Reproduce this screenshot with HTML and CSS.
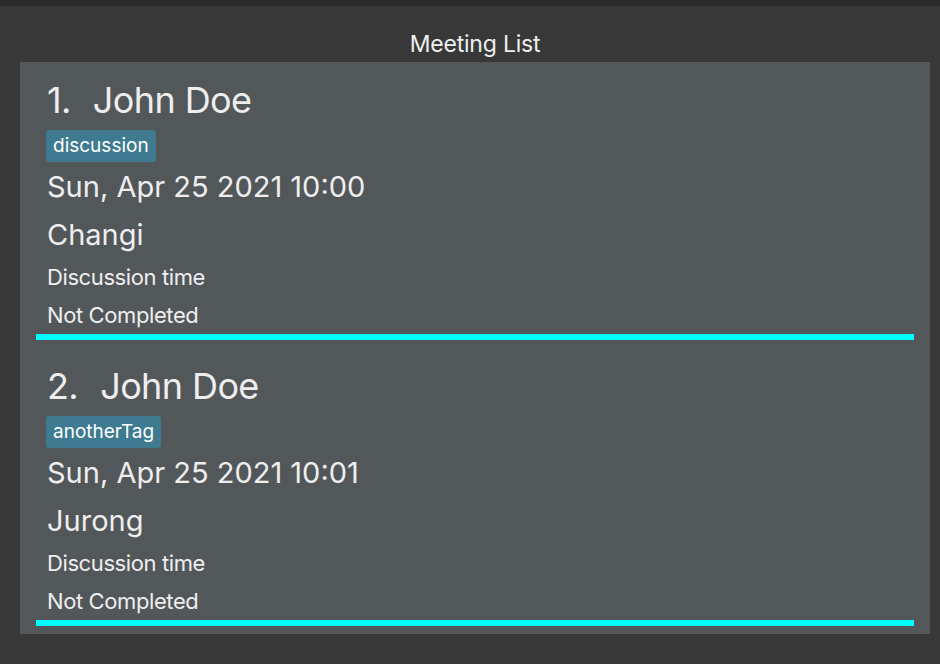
FILE: index.html
```html
<!DOCTYPE html>
<html>
<head>
<meta charset="utf-8">
<link rel="stylesheet" href="styles.css">
</head>
<body>
<div class="topbar"></div>
<div class="title">Meeting List</div>
<div class="panel">
  <div class="card">
    <div class="name"><span class="idx">1.&nbsp;</span> John Doe</div>
    <div class="tags"><span class="tag">discussion</span></div>
    <div class="date">Sun, Apr 25 2021 10:00</div>
    <div class="place">Changi</div>
    <div class="small">Discussion time</div>
    <div class="small status">Not Completed</div>
  </div>
  <div class="card">
    <div class="name"><span class="idx">2.&nbsp;</span> John Doe</div>
    <div class="tags"><span class="tag">anotherTag</span></div>
    <div class="date">Sun, Apr 25 2021 10:01</div>
    <div class="place">Jurong</div>
    <div class="small">Discussion time</div>
    <div class="small status">Not Completed</div>
  </div>
</div>
</body>
</html>
```

FILE: styles.css
```css
html, body {
  margin: 0;
  padding: 0;
  background: #383838;
  height: 100%;
  overflow: hidden;
}
body {
  font-family: Inter, "Open Sans", "Liberation Sans", sans-serif;
  color: #eeeeee;
}
.topbar {
  height: 6px;
  background: #2b2b2b;
}
.title {
  height: 56px;
  padding-top: 24px;
  line-height: 28px;
  text-align: center;
  font-size: 23px;
  padding-left: 10px;
  box-sizing: border-box;
  letter-spacing: -0.2px;
}
.panel {
  margin: 0 10px 0 20px;
  background: #52575a;
  display: flow-root;
}
.card {
  margin: 0 16px 8px;
  padding: 8px 0 0 11px;
  border-bottom: 6px solid #00ffff;
}
.name {
  font-size: 36px;
  line-height: 60px;
  white-space: pre;
  letter-spacing: -0.6px;
}
.idx {
  padding-right: 3px;
}
.tags {
  height: 32px;
  display: flex;
  margin-left: -1px;
}
.tag {
  background: #3e7b91;
  border-radius: 3px;
  font-size: 19px;
  line-height: 32px;
  padding: 0 7px;
  color: #ffffff;
}
.date {
  font-size: 29px;
  line-height: 50px;
}
.place {
  font-size: 29px;
  line-height: 46px;
}
.small {
  font-size: 22px;
  line-height: 39px;
  letter-spacing: -0.4px;
}
.status {
  line-height: 37px;
}
```
